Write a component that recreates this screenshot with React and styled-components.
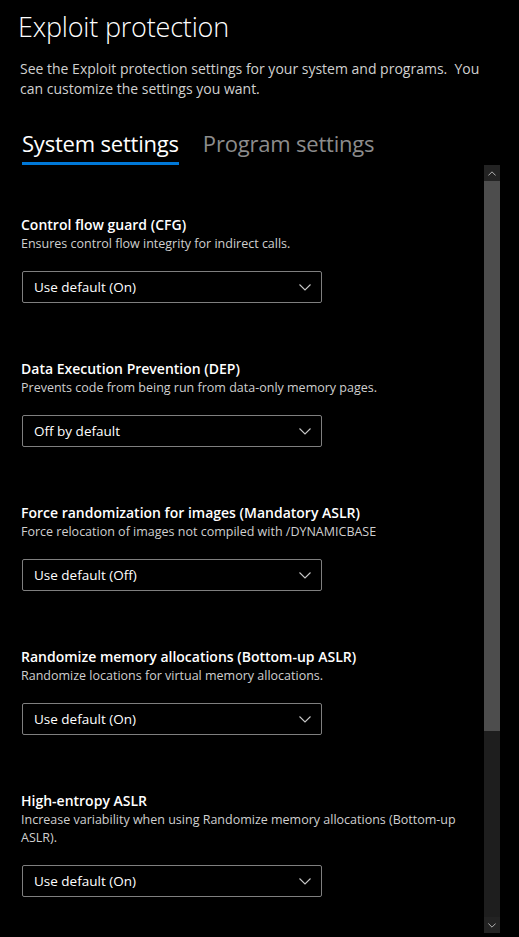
import React from 'react';
import styled, { createGlobalStyle } from 'styled-components';

const GlobalStyle = createGlobalStyle`
  * { box-sizing: border-box; }
  html, body {
    margin: 0;
    padding: 0;
    background: #000;
    color: #fff;
    font-family: "Open Sans", "Noto Sans", sans-serif;
  }
`;

const settings = [
  {
    title: 'Control flow guard (CFG)',
    desc: 'Ensures control flow integrity for indirect calls.',
    value: 'Use default (On)',
  },
  {
    title: 'Data Execution Prevention (DEP)',
    desc: 'Prevents code from being run from data-only memory pages.',
    value: 'Off by default',
  },
  {
    title: 'Force randomization for images (Mandatory ASLR)',
    desc: 'Force relocation of images not compiled with /DYNAMICBASE',
    value: 'Use default (Off)',
  },
  {
    title: 'Randomize memory allocations (Bottom-up ASLR)',
    desc: 'Randomize locations for virtual memory allocations.',
    value: 'Use default (On)',
  },
  {
    title: 'High-entropy ASLR',
    desc: 'Increase variability when using Randomize memory allocations (Bottom-up ASLR).',
    value: 'Use default (On)',
  },
];

function Chevron({ up, size = 12, color = '#c8c8c8' }) {
  return (
    <svg width={size} height={size / 2 + 1} viewBox="0 0 12 7" fill="none">
      <path
        d={up ? 'M0.5 6.5 L6 1 L11.5 6.5' : 'M0.5 0.5 L6 6 L11.5 0.5'}
        stroke={color}
        strokeWidth="1.1"
      />
    </svg>
  );
}

export default function App() {
  return (
    <Page>
      <GlobalStyle />
      <Header>
        <h1>Exploit protection</h1>
        <p>
          See the Exploit protection settings for your system and programs.&nbsp; You
          can customize the settings you want.
        </p>
      </Header>

      <Tabs>
        <Tab active>System settings</Tab>
        <Tab>Program settings</Tab>
      </Tabs>

      <ScrollArea>
        <Content>
          {settings.map((s) => (
            <Setting key={s.title}>
              <h2>{s.title}</h2>
              <p>{s.desc}</p>
              <Select>
                <span>{s.value}</span>
                <Chevron />
              </Select>
            </Setting>
          ))}
        </Content>

        <Scrollbar>
          <ScrollButton>
            <Chevron up size={8} color="#e6e6e6" />
          </ScrollButton>
          <Thumb />
          <Track />
          <ScrollButton>
            <Chevron size={8} color="#e6e6e6" />
          </ScrollButton>
        </Scrollbar>
      </ScrollArea>
    </Page>
  );
}

const Page = styled.div`
  width: 519px;
  height: 937px;
  overflow: hidden;
  display: flex;
  flex-direction: column;
  background: #000;
`;

const Header = styled.div`
  padding: 8px 18px 0 18px;

  h1 {
    margin: 0;
    font-size: 27px;
    font-weight: 300;
    line-height: 38px;
    letter-spacing: -0.2px;
    color: #fff;
  }

  p {
    margin: 13px 0 0 2px;
    font-size: 14px;
    line-height: 20px;
    color: #d0d0d0;
    width: 470px;
  }
`;

const Tabs = styled.div`
  display: flex;
  gap: 24px;
  padding: 29px 0 0 22px;
`;

const Tab = styled.div`
  font-size: 22px;
  font-weight: 400;
  line-height: 30px;
  padding-bottom: 4px;
  color: ${(p) => (p.active ? '#fff' : '#8c8c8c')};
  border-bottom: 3px solid ${(p) => (p.active ? '#0078d7' : 'transparent')};
  letter-spacing: -0.2px;
`;

const ScrollArea = styled.div`
  display: flex;
  height: 768px;
  margin-top: 0;
`;

const Content = styled.div`
  flex: 1;
  padding: 50px 0 0 21px;
  overflow: hidden;
`;

const Setting = styled.div`
  margin-bottom: 56px;

  h2 {
    margin: 0;
    font-size: 14px;
    font-weight: 600;
    line-height: 20px;
    color: #fff;
  }

  p {
    margin: 0;
    font-size: 12.5px;
    line-height: 18px;
    color: #cfcfcf;
    width: 440px;
  }
`;

const Select = styled.div`
  margin: 18px 0 0 1px;
  width: 300px;
  height: 32px;
  border: 1px solid #7f7f7f;
  border-radius: 2px;
  display: flex;
  align-items: center;
  justify-content: space-between;
  padding: 0 10px 0 11px;
  font-size: 13.5px;
  color: #fff;
`;

const Scrollbar = styled.div`
  width: 16px;
  margin-right: 19px;
  display: flex;
  flex-direction: column;
  background: #1e1e1e;
`;

const ScrollButton = styled.div`
  height: 16px;
  display: flex;
  align-items: center;
  justify-content: center;
  background: #232323;
`;

const Thumb = styled.div`
  height: 550px;
  background: #4d4d4d;
`;

const Track = styled.div`
  flex: 1;
`;
